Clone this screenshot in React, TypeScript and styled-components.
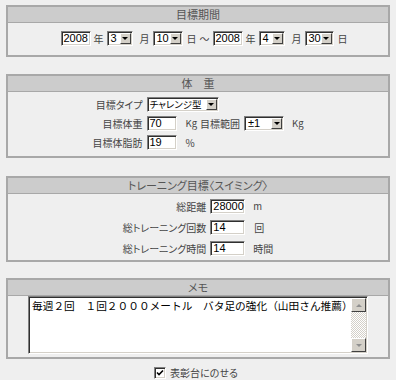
import React from "react";
import styled, { createGlobalStyle } from "styled-components";

const GlobalStyle = createGlobalStyle`
  html, body {
    margin: 0;
    padding: 0;
    background: #efefef;
  }
  body {
    font-family: "Noto Sans CJK JP", "Noto Sans", sans-serif;
    font-size: 11px;
    color: #444;
  }
`;

const Page = styled.div`
  width: 396px;
  height: 380px;
  box-sizing: border-box;
  padding: 5px 6px 0;
  display: flex;
  flex-direction: column;
`;

const Panel = styled.section<{ $mb: number }>`
  border: 2px solid #a8a8a8;
  margin-bottom: ${(p) => p.$mb}px;
  background: #efefef;
`;

const PanelHead = styled.div`
  height: 15px;
  line-height: 15px;
  background: #cccccc;
  border-bottom: 1px solid #a8a8a8;
  text-align: center;
  color: #555;
  font-size: 11px;
  font-feature-settings: "palt";
`;

const PanelBody = styled.div<{ $h: number; $pt: number }>`
  height: ${(p) => p.$h}px;
  box-sizing: border-box;
  padding-top: ${(p) => p.$pt}px;
`;

const DateRow = styled.div`
  display: flex;
  align-items: center;
  justify-content: center;
  padding-left: 12px;
  gap: 3px;
`;

const FormGrid = styled.div<{ $rowGap: number }>`
  display: grid;
  grid-template-columns: auto auto;
  justify-content: center;
  column-gap: 4px;
  row-gap: ${(p) => p.$rowGap}px;
  align-items: center;
`;

const Label = styled.span`
  text-align: right;
  line-height: 15px;
  font-size: 10px;
  font-feature-settings: "palt";
  white-space: nowrap;
`;

const Field = styled.div`
  display: flex;
  align-items: center;
`;

const Text = styled.span<{ $ml?: number; $mr?: number; $size?: number }>`
  margin-left: ${(p) => p.$ml ?? 0}px;
  margin-right: ${(p) => p.$mr ?? 0}px;
  font-size: ${(p) => p.$size ?? 10}px;
  line-height: 15px;
  font-feature-settings: "palt";
  white-space: nowrap;
`;

const TextInput = styled.span<{ $w: number }>`
  display: inline-block;
  box-sizing: border-box;
  width: ${(p) => p.$w}px;
  height: 15px;
  background: #fff;
  border: 1px solid;
  border-color: #808080 #ffffff #ffffff #808080;
  box-shadow: inset 1px 1px #303030, inset -1px -1px #d4d0c8;
  padding: 0 2px;
  font-family: "Liberation Sans", Arial, sans-serif;
  font-size: 11px;
  line-height: 13px;
  color: #000;
`;

const Select = styled.span<{ $w: number; $mr?: number }>`
  display: inline-flex;
  align-items: stretch;
  box-sizing: border-box;
  width: ${(p) => p.$w}px;
  height: 15px;
  margin-right: ${(p) => p.$mr ?? 0}px;
  background: #fff;
  border: 1px solid;
  border-color: #808080 #ffffff #ffffff #808080;
  box-shadow: inset 1px 1px #303030, inset -1px -1px #d4d0c8;
  padding: 1px;
  color: #000;
`;

const SelectValue = styled.span<{ $jp?: boolean }>`
  flex: 1;
  padding-left: ${(p) => (p.$jp ? 1 : 2)}px;
  font-family: ${(p) =>
    p.$jp
      ? `"Noto Sans CJK JP", sans-serif`
      : `"Liberation Sans", Arial, sans-serif`};
  font-size: ${(p) => (p.$jp ? 9.5 : 11)}px;
  line-height: 11px;
  white-space: nowrap;
  font-feature-settings: "palt";
`;

const ArrowButton = styled.span`
  width: 11px;
  flex: none;
  box-sizing: border-box;
  background: #d4d0c8;
  border: 1px solid;
  border-color: #ffffff #404040 #404040 #ffffff;
  display: flex;
  align-items: center;
  justify-content: center;

  &::after {
    content: "";
    border-left: 3px solid transparent;
    border-right: 3px solid transparent;
    border-top: 3px solid #000;
  }
`;

const MemoBox = styled.div`
  display: flex;
  box-sizing: border-box;
  width: 340px;
  height: 58px;
  margin: 0 auto;
  background: #fff;
  border: 1px solid;
  border-color: #808080 #ffffff #ffffff #808080;
  box-shadow: inset 1px 1px #303030, inset -1px -1px #d4d0c8;
  padding: 1px;
`;

const MemoText = styled.textarea`
  flex: 1;
  border: none;
  resize: none;
  outline: none;
  overflow: hidden;
  padding: 1px 2px;
  margin: 0;
  background: transparent;
  font-family: "Noto Sans CJK JP", sans-serif;
  font-size: 10.7px;
  line-height: 14px;
  color: #000;
`;

const ScrollBar = styled.div`
  width: 15px;
  display: flex;
  flex-direction: column;
  background: repeating-conic-gradient(#d4d0c8 0 25%, #ffffff 0 50%) 0 0 / 2px
    2px;
`;

const ScrollButton = styled.span<{ $dir: "up" | "down" }>`
  height: 14px;
  box-sizing: border-box;
  background: #d4d0c8;
  border: 1px solid;
  border-color: #ffffff #404040 #404040 #ffffff;
  display: flex;
  align-items: center;
  justify-content: center;

  &::after {
    content: "";
    border-left: 3px solid transparent;
    border-right: 3px solid transparent;
    ${(p) =>
      p.$dir === "up"
        ? "border-bottom: 3px solid #909090;"
        : "border-top: 3px solid #909090;"}
  }
`;

const ScrollTrack = styled.span`
  flex: 1;
`;

const CheckRow = styled.label`
  display: flex;
  align-items: center;
  justify-content: center;
  gap: 4px;
  margin-top: 6px;
  padding-right: 4px;
  font-size: 10px;
  font-feature-settings: "palt";
  color: #444;
`;

const CheckBox = styled.span`
  width: 12px;
  height: 12px;
  box-sizing: border-box;
  background: #fff;
  border: 1px solid;
  border-color: #808080 #ffffff #ffffff #808080;
  box-shadow: inset 1px 1px #303030, inset -1px -1px #d4d0c8;
  display: flex;
  align-items: center;
  justify-content: center;
`;

const Sel = ({
  w,
  value,
  mr,
  jp,
}: {
  w: number;
  value: string;
  mr?: number;
  jp?: boolean;
}) => (
  <Select $w={w} $mr={mr}>
    <SelectValue $jp={jp}>{value}</SelectValue>
    <ArrowButton />
  </Select>
);

export default function App() {
  return (
    <>
      <GlobalStyle />
      <Page>
        <Panel $mb={17}>
          <PanelHead>目標期間</PanelHead>
          <PanelBody $h={32} $pt={8}>
            <DateRow>
              <TextInput $w={30}>2008</TextInput>
              <Text>年</Text>
              <Sel w={26} value="3" mr={4} />
              <Text>月</Text>
              <Sel w={30} value="10" mr={1} />
              <Text>日</Text>
              <Text>〜</Text>
              <TextInput $w={30}>2008</TextInput>
              <Text>年</Text>
              <Sel w={26} value="4" mr={4} />
              <Text>月</Text>
              <Sel w={29} value="30" mr={1} />
              <Text>日</Text>
            </DateRow>
          </PanelBody>
        </Panel>

        <Panel $mb={18}>
          <PanelHead>体　重</PanelHead>
          <PanelBody $h={64} $pt={5}>
            <FormGrid $rowGap={4}>
              <Label>目標タイプ</Label>
              <Field>
                <Sel w={72} value="チャレンジ型" jp />
              </Field>
              <Label>目標体重</Label>
              <Field>
                <TextInput $w={30}>70</TextInput>
                <Text $ml={9} $size={9.5}>Kg</Text>
                <Text $ml={3} $mr={4}>目標範囲</Text>
                <Sel w={40} value="±1" />
                <Text $ml={8} $size={9.5}>Kg</Text>
              </Field>
              <Label>目標体脂肪</Label>
              <Field>
                <TextInput $w={30}>19</TextInput>
                <Text $ml={9}>%</Text>
              </Field>
            </FormGrid>
          </PanelBody>
        </Panel>

        <Panel $mb={16}>
          <PanelHead>トレーニング目標〈スイミング〉</PanelHead>
          <PanelBody $h={66} $pt={5}>
            <FormGrid $rowGap={6}>
              <Label>総距離</Label>
              <Field>
                <TextInput $w={35}>28000</TextInput>
                <Text $ml={8} $size={9.5}>m</Text>
              </Field>
              <Label>総トレーニング回数</Label>
              <Field>
                <TextInput $w={35}>14</TextInput>
                <Text $ml={9}>回</Text>
              </Field>
              <Label>総トレーニング時間</Label>
              <Field>
                <TextInput $w={35}>14</TextInput>
                <Text $ml={8}>時間</Text>
              </Field>
            </FormGrid>
          </PanelBody>
        </Panel>

        <Panel $mb={0}>
          <PanelHead>メモ</PanelHead>
          <PanelBody $h={61} $pt={0}>
            <MemoBox>
              <MemoText
                readOnly
                value="毎週２回　１回２０００メートル　バタ足の強化（山田さん推薦）"
              />
              <ScrollBar>
                <ScrollButton $dir="up" />
                <ScrollTrack />
                <ScrollButton $dir="down" />
              </ScrollBar>
            </MemoBox>
          </PanelBody>
        </Panel>

        <CheckRow>
          <CheckBox>
            <svg width="8" height="8" viewBox="0 0 8 8">
              <path d="M1 3.5 L3 5.5 L7 1.5" stroke="#000" strokeWidth="1.6" fill="none" />
            </svg>
          </CheckBox>
          表彰台にのせる
        </CheckRow>
      </Page>
    </>
  );
}
